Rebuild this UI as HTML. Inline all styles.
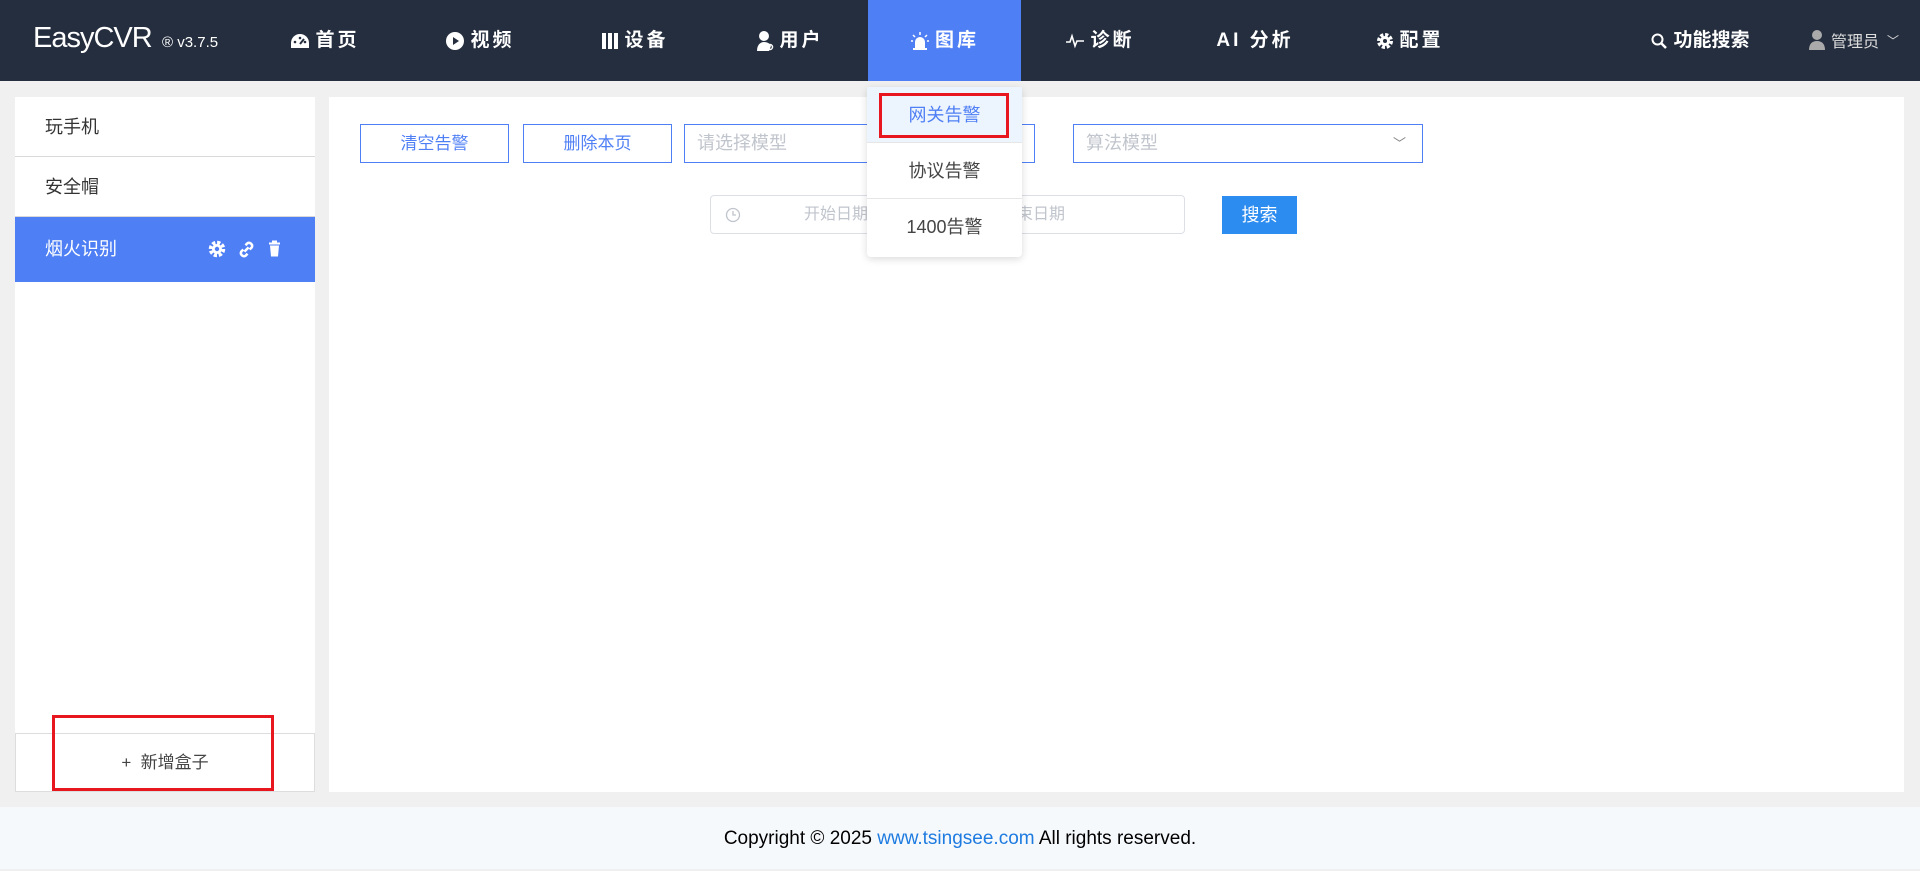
<!DOCTYPE html>
<html><head><meta charset="utf-8"><style>
*{box-sizing:border-box;margin:0;padding:0}
body{width:1920px;height:869px;overflow:hidden;background:#f0f0f0;font-family:"Liberation Sans","Noto Sans CJK SC",sans-serif;position:relative}
.hdr{position:absolute;left:0;top:0;width:1920px;height:81px;background:#252e3e;color:#fff}
.logo{position:absolute;left:33px;top:22px;font-size:29px;letter-spacing:-1px}
.ver{position:absolute;left:162px;top:34px;font-size:15px}
.nav{position:absolute;top:0;height:81px;line-height:81px;font-size:19px;font-weight:bold;letter-spacing:3px;display:flex;align-items:center;justify-content:center}
.nav svg{margin-right:5px}
.act{background:#4f7ff4}
.side{position:absolute;left:15px;top:97px;width:300px;height:695px;background:#fff}
.si{height:60px;line-height:60px;padding-left:30px;font-size:18px;color:#333;border-bottom:1px solid #d9d9d9}
.si.on{background:#4f7ff4;color:#fff;height:65px;line-height:65px;border:none;position:relative}
.add{position:absolute;left:0;bottom:0;width:300px;height:59px;border:1px solid #ddd;text-align:center;line-height:57px;font-size:17px;color:#444}
.main{position:absolute;left:329px;top:97px;width:1575px;height:695px;background:#fff}
.btn{position:absolute;top:124px;height:39px;border:1px solid #4f7ff4;color:#4f7ff4;font-size:17px;text-align:center;line-height:37px}
.sel{position:absolute;top:124px;height:39px;border:1px solid #4f7ff4;color:#c0c4cc;font-size:18px;line-height:37px;padding-left:12px}
.date{position:absolute;left:710px;top:195px;width:475px;height:39px;border:1px solid #dcdfe6;border-radius:4px;color:#c0c4cc;font-size:16px;line-height:37px}
.srch{position:absolute;left:1222px;top:196px;width:75px;height:38px;background:#2d8cf0;color:#fff;font-size:18px;text-align:center;line-height:38px}
.dd{position:absolute;left:867px;top:87px;width:155px;height:170px;background:#fff;border-radius:4px;box-shadow:0 2px 8px rgba(0,0,0,.15)}
.di{height:56px;line-height:56px;text-align:center;font-size:18px;color:#444;border-bottom:1px solid #e6e6e6}
.foot{position:absolute;left:0;top:807px;width:1920px;height:62px;background:#f6f9fc;text-align:center;line-height:64px;font-size:19px;color:#000}
.red{position:absolute;border:3px solid #e8161e}
</style></head><body>
<div class="hdr">
<div class="logo">EasyCVR</div><div class="ver">® v3.7.5</div>
<div class="nav" style="left:270px;width:110px"><svg width="20" height="16" viewBox="0 0 20 16"><path d="M10 1A9 9 0 0 0 1 10v5h18v-5A9 9 0 0 0 10 1z" fill="#fff"/><path d="M10 11l4-5" stroke="#252e3e" stroke-width="2"/><circle cx="5" cy="9" r="1.3" fill="#252e3e"/><circle cx="15" cy="9" r="1.3" fill="#252e3e"/><circle cx="10" cy="5" r="1.3" fill="#252e3e"/></svg>首页</div>
<div class="nav" style="left:425px;width:110px"><svg width="20" height="20" viewBox="0 0 20 20"><circle cx="10" cy="10" r="9" fill="#fff"/><path d="M8 6l6 4-6 4z" fill="#252e3e"/></svg>视频</div>
<div class="nav" style="left:580px;width:110px"><svg width="18" height="18" viewBox="0 0 18 18"><rect x="1" y="1" width="16" height="16" fill="#fff"/><path d="M6 1v16M12 1v16" stroke="#252e3e" stroke-width="2"/></svg>设备</div>
<div class="nav" style="left:735px;width:110px"><svg width="18" height="22" viewBox="0 0 18 22"><circle cx="8" cy="6" r="5" fill="#fff"/><path d="M1 21c0-6 3-9 7-9s6 2 7 4l-2 5z" fill="#fff"/><circle cx="14" cy="17" r="2.5" fill="none" stroke="#fff" stroke-width="1.5"/></svg>用户</div>
<div class="nav act" style="left:868px;width:153px"><svg width="20" height="20" viewBox="0 0 20 20"><path d="M5 17v-6a5 5 0 0 1 10 0v6z" fill="#fff"/><rect x="3" y="17" width="14" height="2" fill="#fff"/><path d="M10 1v3M3 4l2 2M17 4l-2 2M1 10h2M17 10h2" stroke="#fff" stroke-width="1.5"/></svg>图库</div>
<div class="nav" style="left:1045px;width:110px"><svg width="20" height="16" viewBox="0 0 20 16"><path d="M1 9h4l2-6 3 10 2-5h7" stroke="#fff" stroke-width="1.6" fill="none"/></svg>诊断</div>
<div class="nav" style="left:1200px;width:110px">AI 分析</div>
<div class="nav" style="left:1355px;width:110px"><svg width="18" height="18" viewBox="0 0 18 18"><circle cx="9" cy="9" r="6" fill="none" stroke="#fff" stroke-width="4" stroke-dasharray="3 1.7"/><circle cx="9" cy="9" r="5" fill="#fff"/><circle cx="9" cy="9" r="2" fill="#252e3e"/></svg>配置</div>
<div class="nav" style="left:1640px;width:120px;letter-spacing:0"><svg width="18" height="18" viewBox="0 0 18 18"><circle cx="7.5" cy="7.5" r="5" fill="none" stroke="#fff" stroke-width="2"/><path d="M11 11l5 5" stroke="#fff" stroke-width="2.5"/></svg>功能搜索</div>
<div style="position:absolute;left:1808px;top:28px;font-size:16px;color:#ddd;display:flex;align-items:center"><svg width="18" height="22" viewBox="0 0 18 22"><circle cx="9" cy="6" r="5" fill="#aaa"/><path d="M1 21c0-6 3-9 8-9s8 3 8 9z" fill="#aaa"/></svg><span style="margin-left:5px">管理员</span><span style="margin-left:8px;font-size:12px">﹀</span></div>
</div>
<div class="side">
<div class="si">玩手机</div>
<div class="si">安全帽</div>
<div class="si on">烟火识别
<svg width="18" height="18" viewBox="0 0 18 18" style="position:absolute;left:193px;top:23px"><circle cx="9" cy="9" r="6" fill="none" stroke="#fff" stroke-width="4.5" stroke-dasharray="3 1.7"/><circle cx="9" cy="9" r="5" fill="#fff"/><circle cx="9" cy="9" r="2.2" fill="#4f7ff4"/></svg>
<svg width="19" height="19" viewBox="0 0 18 18" style="position:absolute;left:222px;top:23px"><path d="M7 11l4-4M8 5l2-2a3 3 0 0 1 4 4l-2 2M10 13l-2 2a3 3 0 0 1-4-4l2-2" stroke="#fff" stroke-width="2.4" fill="none"/></svg>
<svg width="13" height="17" viewBox="0 0 13 16" style="position:absolute;left:253px;top:23px"><rect x="1" y="2" width="11" height="2" fill="#fff"/><rect x="4" y="0" width="5" height="2" fill="#fff"/><path d="M2 5h9l-1 11H3z" fill="#fff"/></svg></div>
<div class="add">+&nbsp;&nbsp;新增盒子</div>
</div>
<div class="main"></div>
<div class="btn" style="left:360px;width:149px">清空告警</div>
<div class="btn" style="left:523px;width:149px">删除本页</div>
<div class="sel" style="left:684px;width:351px">请选择模型</div>
<div class="sel" style="left:1073px;width:350px">算法模型<span style="position:absolute;right:16px;top:0;color:#888;font-size:13px">﹀</span></div>
<div class="date"><svg width="16" height="16" viewBox="0 0 16 16" style="position:absolute;left:14px;top:11px"><circle cx="8" cy="8" r="6.5" fill="none" stroke="#c0c4cc" stroke-width="1.3"/><path d="M8 4v4h3" stroke="#c0c4cc" stroke-width="1.3" fill="none"/></svg><span style="position:absolute;left:93px">开始日期</span><span style="position:absolute;left:290px">结束日期</span></div>
<div class="srch">搜索</div>
<div class="dd">
<div class="di" style="background:#ecf4fe;color:#4f7ff4">网关告警</div>
<div class="di">协议告警</div>
<div class="di" style="border:none">1400告警</div>
</div>
<div class="red" style="left:879px;top:93px;width:130px;height:45px"></div>
<div class="red" style="left:52px;top:715px;width:222px;height:76px"></div>
<div class="foot">Copyright © 2025 <span style="color:#1e7be0">www.tsingsee.com</span> All rights reserved.</div>
</body></html>
